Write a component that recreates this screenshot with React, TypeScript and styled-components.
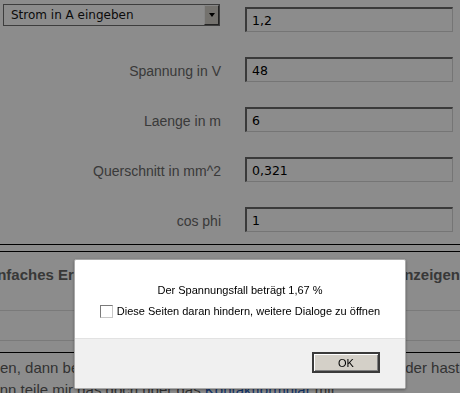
import styled, { createGlobalStyle } from 'styled-components'

type Field = {
  label: string
  value: string
}

const fields: Field[] = [
  { label: 'Spannung in V', value: '48' },
  { label: 'Laenge in m', value: '6' },
  { label: 'Querschnitt in mm^2', value: '0,321' },
  { label: 'cos phi', value: '1' },
]

export default function App(): JSX.Element {
  return (
    <>
      <GlobalStyle />
      <Page>
        <Form>
          <Row $top>
            <SelectBox>
              <SelectValue>Strom in A eingeben</SelectValue>
              <SelectArrow />
            </SelectBox>
            <Input $offset={3} defaultValue="1,2" />
          </Row>
          {fields.map((f) => (
            <Row key={f.label}>
              <Label>{f.label}</Label>
              <Input defaultValue={f.value} />
            </Row>
          ))}
        </Form>

        <Tabs>
          <Tab>Einfaches Ergebnis</Tab>
          <Tab>Ausführlich anzeigen</Tab>
        </Tabs>
        <Band />

        <Text>
          <Line $shift={25}>
            haben, dann benachrichtige mich bitte. Sofern Du Fragen hast, oder hast eine Idee, dann
          </Line>
          <Line $shift={17}>
            dann teile mir das doch über das <a href="#kontakt">Kontaktformular</a> mit.
          </Line>
        </Text>
      </Page>

      <Overlay />
      <Dialog role="dialog">
        <DialogBody>
          <Message>Der Spannungsfall beträgt 1,67 %</Message>
          <CheckRow>
            <Check type="checkbox" />
            Diese Seiten daran hindern, weitere Dialoge zu öffnen
          </CheckRow>
        </DialogBody>
        <DialogFooter>
          <OkButton>OK</OkButton>
        </DialogFooter>
      </Dialog>
    </>
  )
}

const GlobalStyle = createGlobalStyle`
  html, body {
    margin: 0;
    padding: 0;
    background: #fff;
    overflow: hidden;
  }

  body {
    font-family: 'Liberation Sans', Arial, sans-serif;
  }
`

const Page = styled.div`
  width: 460px;
  height: 393px;
  overflow: hidden;
`

const Form = styled.div`
  display: flex;
  flex-direction: column;
  gap: 25px;
  padding: 4px 0 12px;
  border-bottom: 1px solid #000;
`

const Row = styled.div<{ $top?: boolean }>`
  display: flex;
  align-items: ${(p) => (p.$top ? 'flex-start' : 'center')};
`

const Label = styled.label`
  width: 221px;
  margin-right: 24px;
  padding-top: 3px;
  text-align: right;
  font-size: 14px;
  color: #6a6a6a;
`

const SelectBox = styled.div`
  box-sizing: border-box;
  display: flex;
  align-items: center;
  width: 217px;
  height: 22px;
  margin: 0 25px 0 3px;
  border: 1px solid #707070;
  background: #fff;
`

const SelectValue = styled.span`
  flex: 1;
  padding-left: 7px;
  font-family: 'DejaVu Sans', sans-serif;
  font-size: 12px;
  color: #141414;
`

const SelectArrow = styled.span`
  box-sizing: border-box;
  display: flex;
  align-items: center;
  justify-content: center;
  width: 15px;
  height: 20px;
  background: #d4d0c8;
  border: 1px solid;
  border-color: #f4f4f4 #404040 #404040 #f4f4f4;

  &::after {
    content: '';
    border-left: 3.5px solid transparent;
    border-right: 3.5px solid transparent;
    border-top: 4px solid #000;
  }
`

const Input = styled.input<{ $offset?: number }>`
  box-sizing: border-box;
  width: 208px;
  height: 25px;
  margin-top: ${(p) => p.$offset ?? 0}px;
  padding: 0 5px;
  border-style: solid;
  border-width: 2px 1px 1px 2px;
  border-color: #6b6b6b #d6d6d6 #d6d6d6 #6b6b6b;
  background: #fff;
  font-family: 'DejaVu Sans', sans-serif;
  font-size: 12.5px;
  color: #000;
  outline: none;
`

const Tabs = styled.div`
  display: flex;
  justify-content: space-between;
  margin: 6px 0 0 -17px;
  padding: 14px 0 26px;
  border-top: 1px solid #000;
  border-bottom: 1px solid #dedede;
`

const Tab = styled.span`
  font-size: 15px;
  line-height: 18px;
  font-weight: bold;
  color: #666;
  white-space: nowrap;
`

const Band = styled.div`
  height: 29px;
  margin-bottom: 11px;
  border-bottom: 1px solid #dedede;
`

const Text = styled.div`
  padding-top: 4px;
  border-top: 1px solid #000;
  font-size: 15px;
  line-height: 22px;
  color: #5c5c5c;

  a {
    color: #1f5fc4;
  }
`

const Line = styled.div<{ $shift: number }>`
  margin-left: -${(p) => p.$shift}px;
  white-space: nowrap;
`

const Overlay = styled.div`
  position: fixed;
  inset: 0;
  background: rgba(0, 0, 0, 0.45);
`

const Dialog = styled.div`
  position: fixed;
  left: 74px;
  top: 259px;
  box-sizing: border-box;
  display: flex;
  flex-direction: column;
  width: 332px;
  height: 130px;
  border: 1px solid #a9a9a9;
  border-radius: 2px;
  background: #fff;
  box-shadow: 0 1px 3px rgba(0, 0, 0, 0.35);
  font-family: 'Liberation Sans', Arial, sans-serif;
  font-size: 11px;
  color: #000;
`

const DialogBody = styled.div`
  display: flex;
  flex-direction: column;
  align-items: center;
  gap: 5px;
  height: 78px;
  box-sizing: border-box;
  padding-top: 22px;
`

const Message = styled.p`
  margin: 0;
  line-height: 16px;
`

const CheckRow = styled.label`
  display: flex;
  align-items: center;
  gap: 4px;
  line-height: 16px;
`

const Check = styled.input`
  appearance: none;
  box-sizing: border-box;
  width: 13px;
  height: 13px;
  margin: 0;
  border: 1px solid;
  border-color: #7a7a7a #c8c8c8 #c8c8c8 #7a7a7a;
  background: #fff;
`

const DialogFooter = styled.div`
  flex: 1;
  display: flex;
  justify-content: flex-end;
  align-items: flex-start;
  padding: 13px 25px 0 0;
  border-top: 1px solid #e2e2e2;
  background: #f0f0f0;
`

const OkButton = styled.button`
  box-sizing: border-box;
  width: 68px;
  height: 21px;
  padding: 0;
  border: 2px solid #3a3a3a;
  background: #d4d0c8;
  box-shadow: inset 1px 1px #fff, inset -1px -1px #808080;
  font-family: 'Liberation Sans', Arial, sans-serif;
  font-size: 11px;
  color: #000;
`
